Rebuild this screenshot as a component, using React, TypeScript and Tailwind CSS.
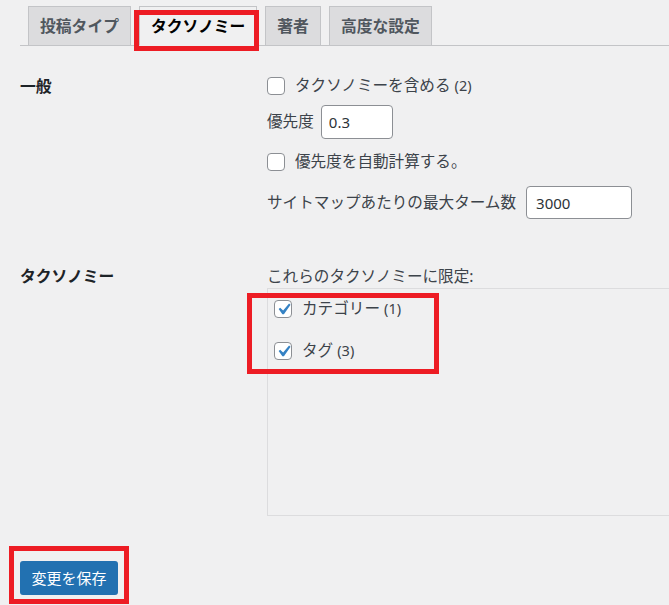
import React from "react";

const tabs = [
    { label: "投稿タイプ", active: false },
    { label: "タクソノミー", active: true },
    { label: "著者", active: false },
    { label: "高度な設定", active: false },
];

// WP-style checkbox
const Check = ({ checked = false }: { checked?: boolean }) => (
    <span className="flex h-[18px] w-[18px] shrink-0 items-center justify-center overflow-visible rounded-[4px] border border-[#8c8f94] bg-white">
        {checked && (
            <svg viewBox="0 0 20 20" className="-m-[3px] h-[23px] w-[23px] shrink-0">
                <path
                    d="M14.83 4.89l1.34.94-5.81 8.38H9.02L5.78 9.67l1.34-1.25 2.57 2.4z"
                    fill="#3582c4"
                />
            </svg>
        )}
    </span>
);

const RedFrame = ({ className }: { className: string }) => (
    <span className={`pointer-events-none absolute border-[5px] border-[#ed1c24] ${className}`} />
);

export default function App() {
    return (
        <div
            className="h-[605px] w-[669px] overflow-hidden bg-[#f0f0f1] text-[15.6px] text-[#3c434a]"
            style={{ fontFamily: '"Noto Sans", "Noto Sans CJK JP", sans-serif' }}
        >
            {/* tabs */}
            <div className="ml-[20px] flex border-b border-[#c3c4c7] pt-[6px]">
                {tabs.map((t) => (
                    <div
                        key={t.label}
                        className={`relative -mb-px ml-[8px] h-[40px] border border-[#c3c4c7] px-[11px] text-[15.8px] font-bold leading-[38px] ${
                            t.active
                                ? "border-b-[#f0f0f1] bg-[#f0f0f1] text-black"
                                : "bg-[#dcdcde] text-[#50575e]"
                        }`}
                    >
                        {t.label}
                        {t.active && <RedFrame className="-left-[6px] -right-[3px] top-[3px] -bottom-[6px]" />}
                    </div>
                ))}
            </div>

            {/* general */}
            <div className="mt-[29px] grid grid-cols-[247px_1fr] pl-[20px]">
                <div className="text-[15.8px] font-bold leading-[22px] text-[#1d2327]">一般</div>
                <div className="flex flex-col items-start">
                    <label className="flex h-[22px] items-center gap-[10px]">
                        <Check />
                        <span>
                            タクソノミーを含める <span className="text-[14.5px]">(2)</span>
                        </span>
                    </label>
                    <div className="mt-[8px] flex items-center gap-[7px]">
                        <span>優先度</span>
                        <input
                            defaultValue="0.3"
                            className="h-[34px] w-[72px] rounded-[4px] border border-[#8c8f94] bg-white px-[7px] text-[15px] text-[#2c3338] outline-none"
                        />
                    </div>
                    <label className="mt-[12px] flex h-[22px] items-center gap-[10px]">
                        <Check />
                        <span>優先度を自動計算する。</span>
                    </label>
                    <div className="mt-[13px] flex items-center gap-[10px]">
                        <span>サイトマップあたりの最大ターム数</span>
                        <input
                            defaultValue="3000"
                            className="h-[33px] w-[106px] rounded-[4px] border border-[#8c8f94] bg-white px-[9px] text-[15px] text-[#2c3338] outline-none"
                        />
                    </div>
                </div>
            </div>

            {/* taxonomies */}
            <div className="mt-[46px] grid grid-cols-[247px_1fr] pl-[20px]">
                <div className="text-[15.8px] font-bold leading-[22px] text-[#1d2327]">タクソノミー</div>
                <div>
                    <div className="leading-[22px]">これらのタクソノミーに限定:</div>
                    <div className="relative mt-[1px] h-[228px] w-[440px] border border-[#dcdcde] pl-[6px] pt-[9px]">
                        <label className="flex h-[22px] items-center gap-[10px]">
                            <Check checked />
                            <span>
                                カテゴリー <span className="text-[14.5px]">(1)</span>
                            </span>
                        </label>
                        <label className="mt-[20px] flex h-[22px] items-center gap-[10px]">
                            <Check checked />
                            <span>
                                タグ <span className="text-[14.5px]">(3)</span>
                            </span>
                        </label>
                        <RedFrame className="-left-[21px] top-[4px] h-[81px] w-[192px]" />
                    </div>
                </div>
            </div>

            {/* submit */}
            <div className="mt-[45px] pl-[20px]">
                <button className="relative h-[34px] w-[98px] rounded-[3px] bg-[#2271b1] text-[15px] text-white">
                    変更を保存
                    <RedFrame className="-left-[11px] -right-[11px] -top-[15px] -bottom-[9px]" />
                </button>
            </div>
        </div>
    );
}
